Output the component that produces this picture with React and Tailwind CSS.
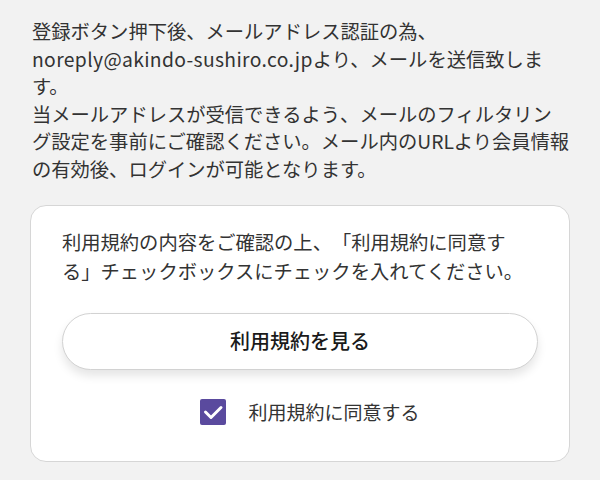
import React, { useState } from "react";

const App = () => {
  const [agreed, setAgreed] = useState(true);

  return (
    <div
      className="min-h-[480px] w-full bg-[#f2f2f2] px-[30px] pt-[18px] pb-[18px] text-[#333] [text-spacing-trim:space-all]"
      style={{ fontFamily: '"Noto Sans CJK JP", "Noto Sans", sans-serif' }}
    >
      {/* notice */}
      <p className="pl-[2px] text-[19.3px] leading-[27.6px]">
        登録ボタン押下後、メールアドレス認証の為、
        <br />
        <span className="tracking-[0.36px]">noreply@akindo-sushiro.co.jp</span>より、メールを送信致します。
        <br />
        当メールアドレスが受信できるよう、メールのフィルタリング設定を事前にご確認ください。メール内のURLより会員情報の有効後、ログインが可能となります。
      </p>

      {/* terms card */}
      <div className="mt-[21px] rounded-[16px] border border-[#d6d6d6] bg-white px-[31px] pt-[22px] pb-[36px]">
        <p className="text-[19.3px] leading-[29.5px]">
          利用規約の内容をご確認の上、「利用規約に同意する」チェックボックスにチェックを入れてください。
        </p>

        <button
          type="button"
          className="mt-[26px] flex h-[57px] w-full items-center justify-center rounded-full border border-[#d2d2d2] bg-white text-[20px] font-medium text-[#1a1a1a] shadow-[0_6px_10px_rgba(0,0,0,0.10)]"
        >
          利用規約を見る
        </button>

        <label className="mt-[29px] flex cursor-pointer items-center justify-center gap-[22px] pl-[20px]">
          <span
            onClick={() => setAgreed(!agreed)}
            className={
              agreed
                ? "flex h-[26px] w-[26px] items-center justify-center rounded-[2px] bg-[#5a4a9e]"
                : "flex h-[26px] w-[26px] items-center justify-center rounded-[2px] border-2 border-[#5a4a9e] bg-white"
            }
          >
            {agreed && (
              <svg width="26" height="26" viewBox="0 0 26 26" fill="none">
                <path
                  d="M5.5 13l5.5 5.5L21 8.5"
                  stroke="white"
                  strokeWidth="3"
                  strokeLinecap="round"
                  strokeLinejoin="round"
                />
              </svg>
            )}
          </span>
          <span className="text-[19px] leading-[26px] text-[#333]">利用規約に同意する</span>
        </label>
      </div>
    </div>
  );
};

export default App;
